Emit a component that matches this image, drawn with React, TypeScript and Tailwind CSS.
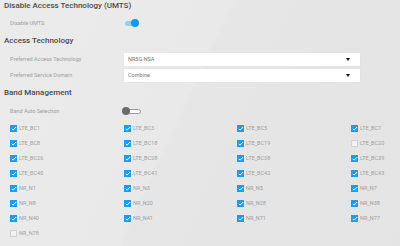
import React from 'react';

const bands: { name: string; on: boolean }[] = [
  { name: 'LTE_BC1', on: true },
  { name: 'LTE_BC3', on: true },
  { name: 'LTE_BC5', on: true },
  { name: 'LTE_BC7', on: true },
  { name: 'LTE_BC8', on: true },
  { name: 'LTE_BC18', on: true },
  { name: 'LTE_BC19', on: true },
  { name: 'LTE_BC20', on: false },
  { name: 'LTE_BC26', on: true },
  { name: 'LTE_BC28', on: true },
  { name: 'LTE_BC38', on: true },
  { name: 'LTE_BC39', on: true },
  { name: 'LTE_BC40', on: true },
  { name: 'LTE_BC41', on: true },
  { name: 'LTE_BC42', on: true },
  { name: 'LTE_BC43', on: true },
  { name: 'NR_N1', on: true },
  { name: 'NR_N3', on: true },
  { name: 'NR_N5', on: true },
  { name: 'NR_N7', on: true },
  { name: 'NR_N8', on: true },
  { name: 'NR_N20', on: true },
  { name: 'NR_N28', on: true },
  { name: 'NR_N38', on: true },
  { name: 'NR_N40', on: true },
  { name: 'NR_N41', on: true },
  { name: 'NR_N71', on: true },
  { name: 'NR_N77', on: true },
  { name: 'NR_N78', on: false },
];

const Heading: React.FC<{ children: React.ReactNode }> = ({ children }) => (
  <div className="h-[12px] flex items-center pl-[4px] text-[8px] font-medium text-[#4a4a4a] leading-none">
    {children}
  </div>
);

const Toggle: React.FC<{ on: boolean }> = ({ on }) =>
  on ? (
    <div className="relative w-[16px] h-[8px] flex items-center">
      <div className="ml-[1px] w-[12px] h-[5px] rounded-full bg-[#8fd0fb]" />
      <div className="absolute left-[7px] top-0 w-[8px] h-[8px] rounded-full bg-[#0d9cf5]" />
    </div>
  ) : (
    <div className="relative w-[17px] h-[8px] flex items-center">
      <div className="ml-[3px] w-[14px] h-[5px] rounded-full bg-white border border-[#9a9a9a]" />
      <div className="absolute left-[-2px] top-0 w-[8px] h-[8px] rounded-full bg-[#6a6a6a]" />
    </div>
  );

const Select: React.FC<{ value: string }> = ({ value }) => (
  <div className="w-[236px] h-[13px] bg-white flex items-center justify-between pl-[4px] pr-[10px] text-[5.5px] text-[#777] shadow-[0_0_1px_rgba(0,0,0,0.08)]">
    <span>{value}</span>
    <span className="w-0 h-0 border-l-[2px] border-r-[2px] border-t-[3px] border-l-transparent border-r-transparent border-t-[#111]" />
  </div>
);

const Check: React.FC<{ on: boolean }> = ({ on }) =>
  on ? (
    <div className="w-[7px] h-[7px] bg-[#1a9cf2] flex items-center justify-center">
      <svg width="6" height="5" viewBox="0 0 6 5">
        <path d="M0.8 3 L2.2 4 L5.2 1" stroke="white" strokeWidth="1" fill="none" />
      </svg>
    </div>
  ) : (
    <div className="w-[7px] h-[7px] bg-[#f2f2f2] border border-[#d2d2d2]" />
  );

export default function App() {
  return (
    <div
      className="w-[400px] h-[246px] overflow-hidden bg-[linear-gradient(115deg,#ebebeb_0%,#e9e9e9_45%,#e6e6e6_46%,#e4e4e4_100%)] text-[#a0a0a0]"
      style={{ fontFamily: 'Roboto, "Liberation Sans", sans-serif' }}
    >
      <Heading>Disable Access Technology (UMTS)</Heading>

      <div className="mt-[5px] h-[12px] flex items-center text-[5.5px]">
        <div className="w-[124px] pl-[10px]">Disable UMTS</div>
        <Toggle on={true} />
      </div>

      <div className="mt-[6px]">
        <Heading>Access Technology</Heading>
      </div>

      <div className="mt-[6px] flex flex-col gap-[3px] text-[5.5px]">
        <div className="flex items-center">
          <div className="w-[124px] pl-[10px]">Preferred Access Technology</div>
          <Select value="NR5G-NSA" />
        </div>
        <div className="flex items-center">
          <div className="w-[124px] pl-[10px]">Preferred Service Domain</div>
          <Select value="Combine" />
        </div>
      </div>

      <div className="mt-[5px]">
        <Heading>Band Management</Heading>
      </div>

      <div className="mt-[6px] h-[12px] flex items-center text-[5.5px]">
        <div className="w-[124px] pl-[10px]">Band Auto Selection</div>
        <Toggle on={false} />
      </div>

      <div className="mt-[4px] pl-[10px] grid grid-cols-[114px_113px_114px_1fr] auto-rows-[15px] text-[5.5px]">
        {bands.map(b => (
          <div key={b.name} className="flex items-center gap-[2px]">
            <Check on={b.on} />
            <span>{b.name}</span>
          </div>
        ))}
      </div>
    </div>
  );
}
